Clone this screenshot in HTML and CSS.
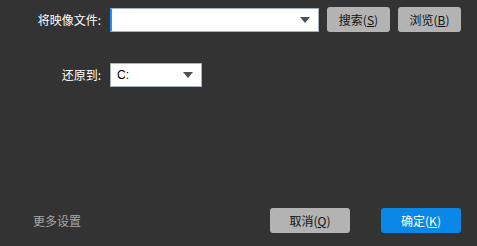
FILE: index.html
```html
<!DOCTYPE html>
<html>
<head>
<meta charset="utf-8">
<link rel="stylesheet" href="styles.css">
</head>
<body>
<div class="dialog">
  <div class="row row-file">
    <span class="label">将映像文件:</span>
    <div class="combo combo-file">
      <span class="combo-text"></span>
      <span class="arrow"></span>
    </div>
    <button class="btn btn-grey btn-small">搜索(<u>S</u>)</button>
    <button class="btn btn-grey btn-small">浏览(<u>B</u>)</button>
  </div>
  <div class="row row-restore">
    <span class="label">还原到:</span>
    <div class="combo combo-drive">
      <span class="combo-text">C:</span>
      <span class="arrow"></span>
    </div>
  </div>
  <div class="footer">
    <span class="more">更多设置</span>
    <div class="actions">
      <button class="btn btn-grey btn-wide">取消(<u>Q</u>)</button>
      <button class="btn btn-blue btn-wide">确定(<u>K</u>)</button>
    </div>
  </div>
</div>
</body>
</html>
```
FILE: styles.css
```css
html, body {
  margin: 0;
  padding: 0;
  background: #333333;
}
body {
  font-family: "Noto Sans CJK SC", "Noto Sans", sans-serif;
  font-size: 12px;
  color: #ffffff;
}
.dialog {
  width: 477px;
  height: 246px;
  display: flex;
  flex-direction: column;
  box-sizing: border-box;
  padding-top: 7px;
  padding-bottom: 13px;
}
.row {
  display: flex;
  align-items: center;
}
.label {
  width: 101px;
  padding-right: 9px;
  text-align: right;
  color: #ffffff;
  white-space: nowrap;
  line-height: 16px;
}
.combo {
  box-sizing: border-box;
  background: #ffffff;
  border: 1px solid #a6b3bf;
  display: flex;
  align-items: center;
  justify-content: space-between;
  padding: 0 8px 0 6px;
  color: #000;
  font-family: "Liberation Sans", sans-serif;
  font-size: 12px;
}
.combo-file {
  width: 209px;
  height: 24px;
  border-left: 2px solid #1e8fff;
}
.combo-drive {
  width: 92px;
  height: 24px;
}
.arrow {
  width: 0;
  height: 0;
  border-left: 5px solid transparent;
  border-right: 5px solid transparent;
  border-top: 6px solid #505050;
}
.btn {
  box-sizing: border-box;
  border: none;
  border-radius: 3px;
  font-family: "Noto Sans CJK SC", sans-serif;
  font-size: 12px;
  height: 25px;
  padding: 0;
  line-height: 25px;
}
.btn u {
  text-decoration-thickness: 1px;
  text-underline-offset: 1px;
}
.btn-grey {
  background: #b3b3b3;
  color: #111111;
}
.btn-blue {
  background: #0a88e8;
  color: #ffffff;
}
.btn-small {
  width: 63px;
  margin-left: 8px;
}
.row-restore {
  margin-top: 31px;
}
.footer {
  margin-top: auto;
  display: flex;
  align-items: center;
  justify-content: space-between;
  padding-left: 33px;
  padding-right: 16px;
}
.more {
  color: #a8a8a8;
  font-size: 12px;
}
.actions {
  display: flex;
  gap: 31px;
}
.btn-wide {
  width: 80px;
}
```
